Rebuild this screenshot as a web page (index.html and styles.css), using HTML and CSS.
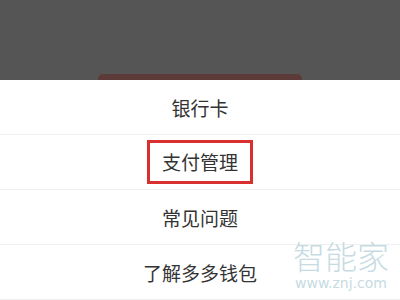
FILE: index.html
```html
<!DOCTYPE html>
<html>
<head>
<meta charset="utf-8">
<link rel="stylesheet" href="styles.css">
</head>
<body>
<div class="overlay">
  <div class="peek"></div>
</div>
<div class="sheet">
  <div class="row"><span>银行卡</span></div>
  <div class="row"><span class="boxed">支付管理</span></div>
  <div class="row"><span>常见问题</span></div>
  <div class="row"><span>了解多多钱包</span></div>
</div>
<div class="mark">
  <div class="mark-cn">智能家</div>
  <div class="mark-en">www.znj.com</div>
</div>
</body>
</html>
```
FILE: styles.css
```css
html, body {
  margin: 0;
  padding: 0;
  width: 400px;
  height: 300px;
  overflow: hidden;
  background: #fff;
  font-family: "Noto Sans CJK SC", "Noto Sans", sans-serif;
}
.overlay {
  height: 80px;
  background: #555555;
  display: flex;
  justify-content: center;
  align-items: flex-end;
}
.peek {
  width: 204px;
  height: 6px;
  background: #5b3a37;
  border-radius: 5px 5px 0 0;
}
.sheet {
  display: flex;
  flex-direction: column;
}
.row {
  height: 54px;
  border-bottom: 1px solid #efefef;
  display: flex;
  align-items: center;
  justify-content: center;
  font-size: 19px;
  color: #333;
}
.boxed {
  border: 3px solid #d8302e;
  padding: 6px 12px;
  line-height: 26px;
}
.mark {
  position: absolute;
  left: 290px;
  top: 239px;
  width: 102px;
  display: flex;
  flex-direction: column;
  align-items: center;
  gap: 5px;
  color: #c6dbe2;
}
.mark-cn {
  font-size: 32px;
  line-height: 32px;
  font-weight: 300;
}
.mark-en {
  font-family: "DejaVu Sans", sans-serif;
  font-size: 14px;
  line-height: 15px;
}
```
